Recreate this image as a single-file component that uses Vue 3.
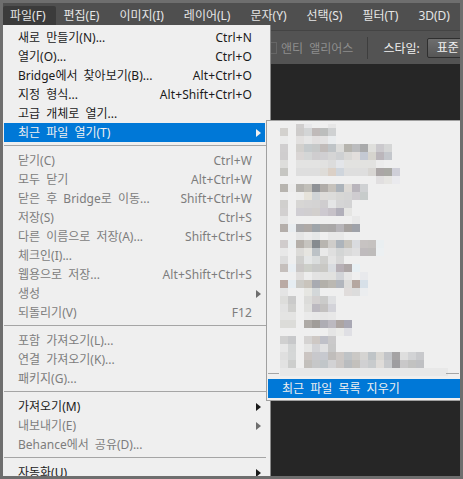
<template>
  <div class="window">
    <div class="menubar">
      <div v-for="(m, i) in topMenus" :key="m" class="top-item" :class="{ open: i === 0 }">{{ m }}</div>
    </div>
    <div class="workspace">
      <div class="options">
        <span class="check"></span>
        <span class="anti">앤티 앨리어스</span>
        <span class="opt-sep"></span>
        <span class="style-label">스타일:</span>
        <span class="style-select">표준</span>
      </div>
      <div class="canvas"></div>
    </div>

    <div class="menu">
      <template v-for="(it, i) in items" :key="i">
        <div v-if="it.sep" class="sep"></div>
        <div v-else class="row" :class="{ off: it.off, active: it.active }">
          <span>{{ it.label }}</span>
          <span class="key">{{ it.key }}</span>
          <span v-if="it.sub" class="arrow"></span>
        </div>
      </template>
    </div>

    <div class="submenu">
      <div class="mosaic">
        <div v-for="(line, y) in mosaic" :key="y" class="mline" :class="{ half: y === 0 }">
          <i v-for="(c, x) in line.split(' ')" :key="x" :style="c === '.' ? null : { background: '#' + c }"></i>
        </div>
      </div>
      <div class="sub-sep"><b></b><b></b></div>
      <div class="clear">최근 파일 목록 지우기</div>
    </div>
  </div>
</template>

<script setup>
const topMenus = ['파일(F)', '편집(E)', '이미지(I)', '레이어(L)', '문자(Y)', '선택(S)', '필터(T)', '3D(D)']

const items = [
  { label: '새로 만들기(N)...', key: 'Ctrl+N' },
  { label: '열기(O)...', key: 'Ctrl+O' },
  { label: 'Bridge에서 찾아보기(B)...', key: 'Alt+Ctrl+O' },
  { label: '지정 형식...', key: 'Alt+Shift+Ctrl+O' },
  { label: '고급 개체로 열기...' },
  { label: '최근 파일 열기(T)', active: true, sub: true },
  { sep: true },
  { label: '닫기(C)', key: 'Ctrl+W', off: true },
  { label: '모두 닫기', key: 'Alt+Ctrl+W', off: true },
  { label: '닫은 후 Bridge로 이동...', key: 'Shift+Ctrl+W', off: true },
  { label: '저장(S)', key: 'Ctrl+S', off: true },
  { label: '다른 이름으로 저장(A)...', key: 'Shift+Ctrl+S', off: true },
  { label: '체크인(I)...', off: true },
  { label: '웹용으로 저장...', key: 'Alt+Shift+Ctrl+S', off: true },
  { label: '생성', off: true, sub: true },
  { label: '되돌리기(V)', key: 'F12', off: true },
  { sep: true },
  { label: '포함 가져오기(L)...', off: true },
  { label: '연결 가져오기(K)...', off: true },
  { label: '패키지(G)...', off: true },
  { sep: true },
  { label: '가져오기(M)', sub: true },
  { label: '내보내기(E)', off: true, sub: true },
  { label: 'Behance에서 공유(D)...', off: true },
  { sep: true },
  { label: '자동화(U)', sub: true }
]

// blurred file names in the recent list, one line per 8px row, '.' is empty
const mosaic = [
  '. . d0cece e8e8ea . . e6e6e6',
  'd3d1ce . cecccb d3d5d6 c0bab9 bcbebd cfd1d2',
  'ebebeb . e2e0df e6e6e6 e2dfdf e3e2e2 e9ecee',
  'd0cecf . d2d0cd c5cacc c6c8c8 c1bcba bfc4c7 dcdcda b6b4ae bbbcbe a9aaab dfdfdc cbc9cd d5d6d6',
  'cfcdce . dad6d5 d4d6d6 cfcdcf d0cfd2 d5d5d5 ced0d2 d9d8d6 e2dedc c4c9d3 d6d4ce bbb6bb c4c7cc',
  'dddddb . e3e3e2 e3e3e2 e3e3e2 e1e1e0 dcdcdc e3e5e9 e2e2e0 e2e2e0 e2e2e0 e2e2e0 ececec',
  'c6c6c2 . dedede dedede dedede dedcd8 dbd0c6 cfd5dc dedede dedede dedede d8d6d3 aba6a6 a9a9a4 cfcfd8',
  '. . . . . . . . . . . . e1dfe0 e6e5e2 eaeaee',
  'b7b4af ececec b5b3af c1bfb9 8f9296 b0aca8 c6c2bc acb3ba dcd9d5 b9b5bc cfd1d3',
  'ededed . ededec e6e3da d0d4d6 dedcd9 dcdcda d7d7d5 d5d5d5 cfccd0 c7cccb',
  'd0cfcd . d7d6d4 d5d4d4 d4d3d3 cfcdcf e4e5e6 d5d5d6 d3d3d4',
  'd2d0d0 . d0ced3 d0ced0 d2cfcd cdc9d0 c6c1c8 b1afba e5e5e3',
  'e5e5e5 . . . . . . . . e8e8e8',
  'b4aeaa e9edf0 a9a9ab aea9a6 9ea4a9 aaa9a8 a9a7a7 b7b5b9 a6a2a0 9fa2a9',
  '. . e5e5e5 ececec e6e8e8 . e8e8e8 e8e8e8',
  'd0cccc ebeff0 b5b0aa c6c4bf 868b8f b8b5b0 cfcdca adb4bb c7c4bd d9dbdf c7c3c2 c5c2c0 eaeff1',
  'e8e8e8 . dcdbd8 e6e5e0 bcc2c6 e9e9e9 dfdfdf d3d5d5 dadada dfdfe0 bfbbbd bebcbb ecf0f2',
  'dcdcdc . cfcfcd e4e6e6 dadddd cfcfcd e4e4e4 d8d8d8',
  'c5bfbc e9eef2 cac7c6 cdcfc9 c8c9c8 c9c8c4 d9dce0 b7b0b6 aea7a7 e8f0f4',
  '. . e0dedd ededed e3e3e3 e1e1e0 e1e1df d2d4d8 e6e6e6 . e8e9ec',
  'baaaa4 e6edf2 cccbc7 c9c4bc a8aab1 b3b0aa bbb8b2 b2b6bd dddcda b5a7a0 d7e0e8',
  'e4e4e4 . . e6e6e2 d3d7d9 . . . e0dcdb dcdcdc ebedef',
  'dddddb cacaca . dcdcda d3d0d0 cbcbca dfe0e2',
  'e2e2e2 d0d0ce . e0e0de bcb9c0 c3c1c0 d3d3d9',
  'e4e4e3 e4e4e3 . eaeaea e8e8e8 e6e6e6 e8e8e8',
  'dcdcd9 dcdcd9 . aeaaa6 a09c98 aeadb4 bcb9c0 ada5a2 a9a8b4',
  '. . . . . . e5e5e5 ebebe9 dfdfe4',
  'd0d0d0 c7c8ca . d5d3d2 cec8c4 bfc0c8 cac9ca',
  'e7e7e7 d4d6d6 . e6e6e5 d3d3d6 e0e0e1 c8c8c8',
  'dfdfdf d5d7d7 . cbc5c2 c8c8cc c7c9cf c0bdbb cdc8c5 bfc3c6 cac8c5 d5d4d2 bfc4c7 d9d7d3 c2c4c8 a5a3a4 dedede d2d3d5 c8c9cc',
  'e2e2e2 cdcecd . c3c0bc c6c7c8 c1c6c9 d2d2d4 cbc7c5 b9bcbf c3c0bc d0d0d2 c8cbcd dfdcd9 c7c9cc 9e9da0 c9c8c9 c2c2c1 bfc0c3',
  'e8e8e8 e8e8e8 e8e8e8 e8e8e8 e8e8e8 e8e8e8 e8e8e8 e8e8e8 e8e8e8 e8e8e8 e8e8e8 e8e8e8 e8e8e8 e8e8e8 e8e8e8 e8e8e8 e8e8e8 e8e8e8 e8e8e8 e8e8e8 e8e8e8'
]
</script>

<style>
html, body {
  margin: 0;
  background: #6e6e6e;
}
</style>

<style scoped>
.window {
  position: relative;
  width: 463px;
  height: 479px;
  overflow: hidden;
  box-sizing: border-box;
  padding: 3px;
  background: #6e6e6e;
  font-family: "Noto Sans", "Noto Sans CJK KR", sans-serif;
  font-size: 12px;
  word-spacing: 3px;
  color: #1a1a1a;
  display: flex;
  flex-direction: column;
}

.menubar {
  height: 27px;
  flex: none;
  box-sizing: border-box;
  padding-top: 3px;
  display: flex;
  background: #4f4f4f;
}

.top-item {
  height: 19px;
  line-height: 19px;
  padding: 0 8px;
  color: #e6e6e6;
  margin-right: 4px;
  white-space: nowrap;
  word-spacing: 0;
}

.top-item.open {
  background: #3b3b3b;
  border-radius: 2px 2px 0 0;
  margin-right: 0;
  padding: 0 10px 0 7px;
}

.workspace {
  flex: 1;
  display: flex;
  flex-direction: column;
}

.options {
  height: 34px;
  box-sizing: border-box;
  flex: none;
  display: flex;
  align-items: center;
  padding-left: 267px;
  background: #535353;
  border-top: 1px solid #444;
  white-space: nowrap;
  overflow: hidden;
}

.options > span {
  flex: none;
}

.check {
  width: 6px;
  height: 10px;
  margin-right: 4px;
  border: 1px solid #666;
  border-left: 0;
}

.anti {
  color: #8e8e8e;
}

.opt-sep {
  width: 1px;
  height: 22px;
  margin: 0 15px 0 14px;
  background: #3e3e3e;
}

.style-label {
  color: #f0f0f0;
}

.style-select {
  margin-left: 7px;
  padding: 0 30px 0 9px;
  height: 18px;
  line-height: 18px;
  color: #f0f0f0;
  background: linear-gradient(#6e6e6e, #565656);
  border: 1px solid #2f2f2f;
  border-radius: 2px;
}

.canvas {
  flex: 1;
  background: #262626;
}

.menu {
  position: absolute;
  left: 3px;
  top: 25px;
  width: 268px;
  height: 451px;
  box-sizing: border-box;
  padding-top: 3px;
  background: #efefef;
  border-right: 1px solid #8a8a8a;
  overflow: hidden;
}

.row {
  position: relative;
  width: 234px;
  height: 19px;
  line-height: 19px;
  margin-left: 1px;
  padding: 0 13px 0 14px;
  display: flex;
  justify-content: space-between;
  white-space: nowrap;
}

.key {
  letter-spacing: 0.1px;
}

.row.off {
  color: #7d7d7d;
}

.row.active {
  width: 247px;
  padding-right: 0;
  background: #0078d7;
  color: #f0f0f0;
}

.arrow {
  position: absolute;
  left: 252px;
  top: 6px;
  border-left: 5px solid #1a1a1a;
  border-top: 4px solid transparent;
  border-bottom: 4px solid transparent;
}

.off .arrow {
  border-left-color: #6e6e6e;
}

.active .arrow {
  border-left-color: #f0f0f0;
}

.sep {
  width: 262px;
  height: 1px;
  margin: 3px 0 5px 1px;
  background: #a5a5a5;
}

.submenu {
  position: absolute;
  left: 266px;
  top: 120px;
  width: 194px;
  height: 281px;
  box-sizing: border-box;
  padding-top: 3px;
  background: #efefef;
  border: 1px solid #a0a0a0;
  border-right: 0;
}

.mosaic {
  padding-left: 13px;
}

.mline {
  display: flex;
  height: 8px;
}

.mline.half {
  height: 4px;
}

.mline i {
  flex: none;
  width: 8px;
}

.sub-sep {
  display: flex;
  justify-content: space-between;
  height: 1px;
  margin-top: -3px;
  padding: 0 1px 0 1px;
}

.sub-sep b {
  width: 11px;
  background: #a5a5a5;
}

.sub-sep b + b {
  width: 13px;
}

.clear {
  height: 19px;
  line-height: 19px;
  margin: 5px 0 0 1px;
  padding-left: 14px;
  background: #0078d7;
  color: #f0f0f0;
}
</style>
